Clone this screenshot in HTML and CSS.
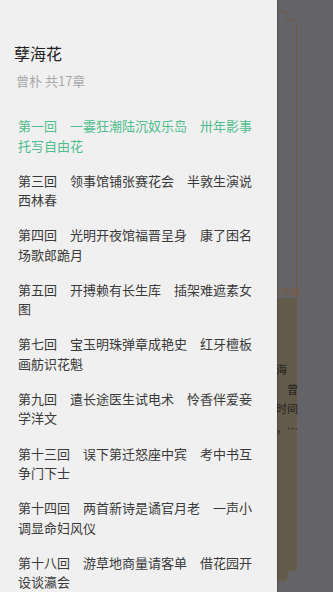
FILE: index.html
```html
<!DOCTYPE html>
<html lang="zh">
<head>
<meta charset="utf-8">
<title>孽海花</title>
<link rel="stylesheet" href="styles.css">
</head>
<body>
<div class="page">
  <div class="card">
    <svg class="card-shape" viewBox="0 0 261 570" width="261" height="570" aria-hidden="true">
      <defs>
        <clipPath id="cardClip">
          <path d="M13 0.5H248Q251 0.5 251 3.5V6Q251 9 254 9H257Q260.5 9 260.5 12.5V556Q260.5 559.5 257 559.5H254Q251 559.5 251 562.5V566Q251 569.5 247.5 569.5H13.5Q10 569.5 10 566V562.5Q10 559.5 7 559.5H4Q0.5 559.5 0.5 556V12.5Q0.5 9 4 9H7Q10 9 10 6V3.5Q10 0.5 13 0.5Z"/>
        </clipPath>
      </defs>
      <rect x="0" y="287" width="261" height="283" fill="#625a4a" clip-path="url(#cardClip)"/>
      <path d="M13 0.5H248Q251 0.5 251 3.5V6Q251 9 254 9H257Q260.5 9 260.5 12.5V556Q260.5 559.5 257 559.5H254Q251 559.5 251 562.5V566Q251 569.5 247.5 569.5H13.5Q10 569.5 10 566V562.5Q10 559.5 7 559.5H4Q0.5 559.5 0.5 556V12.5Q0.5 9 4 9H7Q10 9 10 6V3.5Q10 0.5 13 0.5Z" fill="none" stroke="#6c5a43" stroke-width="1"/>
    </svg>
    <div class="card-body">
      <div class="hot">万热度</div>
      <div class="desc">
        <div class="desc-line l1">孽海</div>
        <div class="desc-line l2">曾</div>
        <div class="desc-line l3">时间</div>
        <div class="desc-line l4">，…</div>
      </div>
    </div>
  </div>
</div>

<aside class="drawer">
  <div class="drawer-head">
    <h1 class="book-title">孽海花</h1>
    <p class="book-meta">曾朴 共17章</p>
  </div>
  <ul class="chapters">
    <li class="chapter active">第一回　一霎狂潮陆沉奴乐岛　卅年影事托写自由花</li>
    <li class="chapter">第三回　领事馆铺张赛花会　半敦生演说西林春</li>
    <li class="chapter">第四回　光明开夜馆福晋呈身　康了困名场歌郎跪月</li>
    <li class="chapter">第五回　开搏赖有长生库　插架难遮素女图</li>
    <li class="chapter">第七回　宝玉明珠弹章成艳史　红牙檀板画舫识花魁</li>
    <li class="chapter">第九回　遣长途医生试电术　怜香伴爱妾学洋文</li>
    <li class="chapter">第十三回　误下第迁怒座中宾　考中书互争门下士</li>
    <li class="chapter">第十四回　两首新诗是谲官月老　一声小调显命妇风仪</li>
    <li class="chapter">第十八回　游草地商量请客单　借花园开设谈瀛会</li>
  </ul>
</aside>
</body>
</html>
```

FILE: styles.css
```css
html, body {
  margin: 0;
  padding: 0;
}

body {
  width: 333px;
  height: 592px;
  overflow: hidden;
  background: #646368;
  font-family: "Noto Sans CJK SC", "Noto Sans", sans-serif;
  position: relative;
}

.page {
  padding: 11px 0 0 36px;
}

.card {
  position: relative;
  width: 261px;
  height: 570px;
}

.card-shape {
  position: absolute;
  left: 0;
  top: 0;
  display: block;
}

.card-body {
  position: relative;
  padding-top: 275px;
  text-align: right;
}

.hot {
  font-size: 9px;
  line-height: 12px;
  color: #7a5a3e;
  margin-right: -3px;
}

.desc {
  margin-top: 62px;
  font-size: 11px;
  line-height: 19.5px;
  color: #27241f;
}

.desc-line.l1 { padding-right: 10px; }
.desc-line.l2 { margin-right: -1px; }
.desc-line.l3 { margin-right: -1px; }
.desc-line.l4 { margin-right: -1px; }

.drawer {
  position: absolute;
  left: 0;
  top: 0;
  width: 277px;
  height: 592px;
  background: #f0f0f0;
  overflow: hidden;
  box-shadow: 1px 0 0 rgba(0, 0, 0, 0.18);
}

.drawer-head {
  padding: 42px 0 0 14px;
}

.book-title {
  margin: 0;
  font-size: 16px;
  line-height: 22px;
  font-weight: normal;
  color: #222222;
}

.book-meta {
  margin: 8px 0 0 2px;
  font-size: 13px;
  line-height: 18px;
  color: #a9a9a9;
}

.chapters {
  list-style: none;
  margin: 26px 0 0;
  padding: 0 20px 0 18px;
}

.chapter {
  font-size: 13px;
  line-height: 19.5px;
  color: #3a3a3a;
  margin-bottom: 15.6px;
}

.chapter.active {
  color: #4fbe8e;
}
```
